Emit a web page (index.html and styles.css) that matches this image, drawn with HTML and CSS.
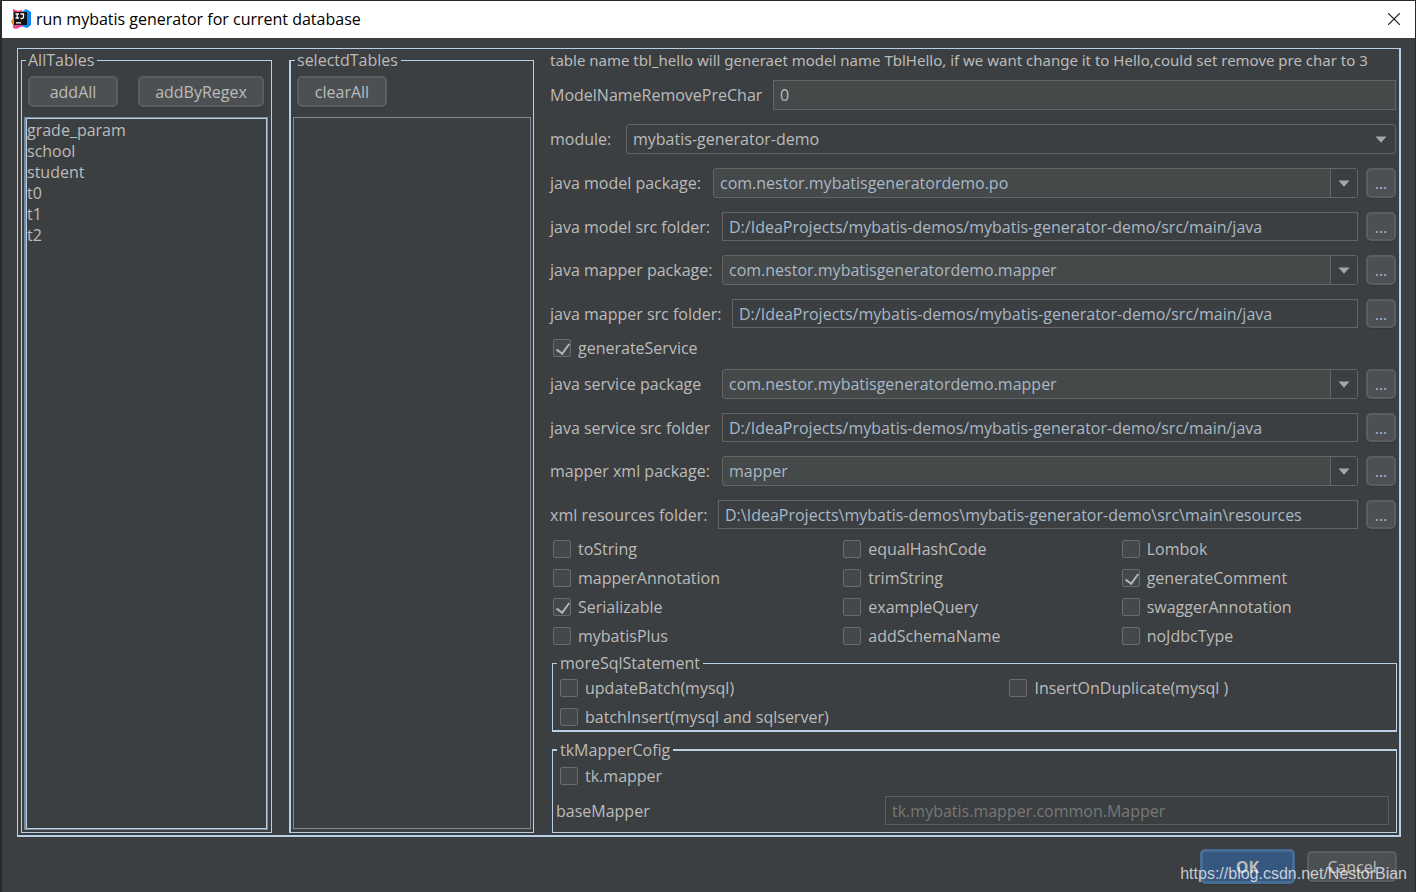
FILE: index.html
```html
<!DOCTYPE html>
<html lang="en">
<head>
<meta charset="utf-8">
<title>run mybatis generator for current database</title>
<link rel="stylesheet" href="styles.css">
</head>
<body>
<svg class="defs" aria-hidden="true">
  <symbol id="arrow" viewBox="0 0 12 7"><path d="M0.500 0.500h11L6 6.800z" fill="#a2a6a9"/></symbol>
</svg>
<main class="window">
  <header class="titlebar">
    <svg class="logo" viewBox="0 0 20 20" aria-hidden="true">
      <path d="M2 0l5 2 4-1 2 5-3 8-9 1 1-6z" fill="#ff3c64"/>
      <path d="M0 12l3-4 4 6-3 3-3-2z" fill="#ff8a2a"/>
      <path d="M11 3l4-3 5 3v13l-4 3-6-2z" fill="#0b86f5"/>
      <path d="M2 15l8 0 2 2-7 3-3-1z" fill="#f0409a"/>
      <path d="M3 3h13v13H3z" fill="#151515"/>
      <path d="M4.500 5h3.500M6.200 5v4M4.500 9h3.500M9.500 5h3v3q0 1.500-1.500 1.500h-1.500M5 13.800h5" fill="none" stroke="#fff" stroke-width="1.300"/>
    </svg>
    <h1 class="title">run mybatis generator for current database</h1>
    <button class="close" type="button" aria-label="Close">
      <svg viewBox="0 0 12 12" aria-hidden="true"><path d="M0 0L12 12M12 0L0 12" stroke="#111" stroke-width="1.100"/></svg>
    </button>
  </header>

  <form class="frame">
    <fieldset class="group tables all">
      <legend>AllTables</legend>
      <div class="actions">
        <button class="btn small" type="button">addAll</button>
        <button class="btn wide" type="button">addByRegex</button>
      </div>
      <ul class="list focused">
        <li>grade_param</li><li>school</li><li>student</li><li>t0</li><li>t1</li><li>t2</li>
      </ul>
    </fieldset>

    <fieldset class="group tables selected">
      <legend>selectdTables</legend>
      <div class="actions">
        <button class="btn small" type="button">clearAll</button>
      </div>
      <ul class="list"></ul>
    </fieldset>

    <div class="settings">
      <p class="hint">table name tbl_hello will generaet model name TblHello, if we want change it to Hello,could set remove pre char to 3</p>

      <div class="rows">
        <div class="row">
          <label class="l-prechar" for="prechar">ModelNameRemovePreChar</label>
          <input class="field filled" id="prechar" type="text" value="0">
        </div>
        <div class="row">
          <label class="l-module" for="module">module:</label>
          <div class="combo plain">
            <select id="module"><option>mybatis-generator-demo</option></select>
            <svg class="arrow" aria-hidden="true"><use href="#arrow"/></svg>
          </div>
        </div>
        <div class="row">
          <label class="l-model" for="modelpkg">java model package:</label>
          <div class="combo"><input id="modelpkg" type="text" value="com.nestor.mybatisgeneratordemo.po"><button type="button" aria-label="Show packages"><svg class="arrow"><use href="#arrow"/></svg></button></div>
          <button class="btn more" type="button">...</button>
        </div>
        <div class="row low">
          <label class="l-std" for="modelsrc">java model src folder:</label>
          <input class="field" id="modelsrc" type="text" value="D:/IdeaProjects/mybatis-demos/mybatis-generator-demo/src/main/java">
          <button class="btn more" type="button">...</button>
        </div>
        <div class="row">
          <label class="l-std" for="mapperpkg">java mapper package:</label>
          <div class="combo"><input id="mapperpkg" type="text" value="com.nestor.mybatisgeneratordemo.mapper"><button type="button" aria-label="Show packages"><svg class="arrow"><use href="#arrow"/></svg></button></div>
          <button class="btn more" type="button">...</button>
        </div>
        <div class="row low">
          <label class="l-mappersrc" for="mappersrc">java mapper src folder:</label>
          <input class="field" id="mappersrc" type="text" value="D:/IdeaProjects/mybatis-demos/mybatis-generator-demo/src/main/java">
          <button class="btn more" type="button">...</button>
        </div>
      </div>

      <label class="check service"><input type="checkbox" checked>generateService</label>

      <div class="rows">
        <div class="row">
          <label class="l-std" for="servicepkg">java service package</label>
          <div class="combo"><input id="servicepkg" type="text" value="com.nestor.mybatisgeneratordemo.mapper"><button type="button" aria-label="Show packages"><svg class="arrow"><use href="#arrow"/></svg></button></div>
          <button class="btn more" type="button">...</button>
        </div>
        <div class="row low">
          <label class="l-std" for="servicesrc">java service src folder</label>
          <input class="field" id="servicesrc" type="text" value="D:/IdeaProjects/mybatis-demos/mybatis-generator-demo/src/main/java">
          <button class="btn more" type="button">...</button>
        </div>
        <div class="row">
          <label class="l-std" for="xmlpkg">mapper xml package:</label>
          <div class="combo"><input id="xmlpkg" type="text" value="mapper"><button type="button" aria-label="Show packages"><svg class="arrow"><use href="#arrow"/></svg></button></div>
          <button class="btn more" type="button">...</button>
        </div>
        <div class="row low">
          <label class="l-xml" for="xmlres">xml resources folder:</label>
          <input class="field" id="xmlres" type="text" value="D:\IdeaProjects\mybatis-demos\mybatis-generator-demo\src\main\resources">
          <button class="btn more" type="button">...</button>
        </div>
      </div>

      <div class="options">
        <label class="check"><input type="checkbox">toString</label>
        <label class="check"><input type="checkbox">equalHashCode</label>
        <label class="check"><input type="checkbox">Lombok</label>
        <label class="check"><input type="checkbox">mapperAnnotation</label>
        <label class="check"><input type="checkbox">trimString</label>
        <label class="check"><input type="checkbox" checked>generateComment</label>
        <label class="check"><input type="checkbox" checked>Serializable</label>
        <label class="check"><input type="checkbox">exampleQuery</label>
        <label class="check"><input type="checkbox">swaggerAnnotation</label>
        <label class="check"><input type="checkbox">mybatisPlus</label>
        <label class="check"><input type="checkbox">addSchemaName</label>
        <label class="check"><input type="checkbox">noJdbcType</label>
      </div>

      <fieldset class="group sql">
        <legend>moreSqlStatement</legend>
        <div class="sql-options">
          <label class="check"><input type="checkbox">updateBatch(mysql)</label>
          <label class="check"><input type="checkbox">InsertOnDuplicate(mysql )</label>
          <label class="check"><input type="checkbox">batchInsert(mysql and sqlserver)</label>
        </div>
      </fieldset>

      <fieldset class="group tk">
        <legend>tkMapperCofig</legend>
        <label class="check"><input type="checkbox">tk.mapper</label>
        <div class="base">
          <label for="base">baseMapper</label>
          <input class="field" id="base" type="text" value="tk.mybatis.mapper.common.Mapper" disabled>
        </div>
      </fieldset>
    </div>
  </form>

  <footer class="footer">
    <button class="btn ok" type="button">OK</button>
    <button class="btn small" type="button">Cancel</button>
    <span class="watermark">https://blog.csdn.net/NestorBian</span>
  </footer>
</main>
</body>
</html>
```
FILE: styles.css
```css
* { box-sizing: border-box; }

body {
  margin: 0;
  padding: 1px 1px 0 2px;
  min-height: 100vh;
  display: flex;
  background: #292a2c;
  color: #bbbbbb;
  font: 16px/22px "Open Sans", "Noto Sans", sans-serif;
}

button, input, select { font: inherit; color: inherit; margin: 0; }
h1, p, ul { margin: 0; padding: 0; }

.defs { position: absolute; width: 0; height: 0; }

.window {
  flex: 1;
  min-width: 0;
  display: flex;
  flex-direction: column;
  background: #3c3f41;
}

.titlebar {
  display: flex;
  align-items: center;
  gap: 5px;
  height: 37px;
  padding: 0 15px 2px 9px;
  background: #ffffff;
  color: #000000;
}
.logo { width: 20px; height: 20px; }
.title { flex: 1; font-size: 16px; font-weight: 400; }
.close { display: flex; padding: 0; border: 0; background: none; }
.close svg { width: 12px; height: 12px; }

.frame {
  flex: 1;
  display: flex;
  margin: 10px 14px 0 15px;
  padding-left: 3px;
  border: solid #b8cfe5;
  border-width: 1px 2px 2px 1px;
  overflow: hidden;
}

.group {
  margin: 0;
  padding: 0;
  min-width: 0;
  border: 1px solid #b8cfe5;
}
.group legend { margin-left: 4px; padding: 0 3px; }

.tables { display: flex; flex-direction: column; margin-bottom: 2px; }
.tables legend { margin-left: 2px; padding: 0 3px 0 2px; }
.all { flex: 0 0 251px; padding: 0 3px 2px 2px; }
.selected { flex: 0 0 245px; margin-left: 17px; padding: 0 2px 3px; border-left-width: 2px; }

.actions { display: flex; gap: 20px; padding: 5px 4px 10px; }

.btn {
  height: 31px;
  padding: 0;
  border: 2px solid #5b5e60;
  border-radius: 5px;
  background: #4c5052;
  box-shadow: 0 1px 1px #353739;
}
.small { width: 90px; }
.wide { width: 126px; }

.list {
  flex: 1;
  list-style: none;
  line-height: 21px;
  padding: 2px 0 0 1px;
  border: 1px solid #7a8a99;
}
.list.focused {
  border-left-width: 2px;
  box-shadow: inset 0 0 0 1px #b8cfe5;
}

.settings {
  flex: 1;
  min-width: 0;
  display: flex;
  flex-direction: column;
  padding: 0 2px 2px 16px;
}
.hint { font-family: "Noto Sans", sans-serif; font-size: 15px; white-space: nowrap; }

.rows { display: flex; flex-direction: column; gap: 14px; }
.hint + .rows { margin-top: 9px; }

.row { display: flex; height: 30px; padding-right: 1px; }
.row.low { height: 29px; }
.row label { flex: none; align-self: center; white-space: nowrap; }
.l-prechar { width: 223px; }
.l-module { width: 76px; }
.l-model { width: 163px; }
.l-std { width: 172px; }
.l-mappersrc { width: 182px; }
.l-xml { width: 168px; }

.field {
  flex: 1;
  min-width: 0;
  height: 100%;
  padding: 0 6px;
  border: 1px solid #646464;
  background: #3c3f41;
  color: #a9b7c6;
}
.field.filled { background: #45494a; color: #bbbbbb; }

.combo {
  flex: 1;
  min-width: 0;
  display: flex;
  border: 1px solid #646464;
  border-radius: 3px;
  background: #45494a;
  color: #a9b7c6;
}
.combo input { flex: 1; min-width: 0; padding: 0 6px; border: 0; background: none; }
.combo button {
  width: 27px;
  padding: 0;
  display: flex;
  align-items: center;
  justify-content: center;
  border: 0;
  border-left: 1px solid #646464;
  background: #3c3f41;
}
.combo.plain { background: #3c3f41; color: #bbbbbb; align-items: center; padding-right: 8px; }
.combo select { flex: 1; height: 28px; padding: 0 6px; appearance: none; border: 0; background: none; }
.arrow { flex: none; width: 12px; height: 7px; }

.more { flex: none; width: 30px; height: 100%; margin-left: 8px; color: #a9b7c6; }

.check { display: flex; align-items: center; gap: 7px; white-space: nowrap; }
.check input {
  appearance: none;
  width: 18px;
  height: 18px;
  border: 1px solid #6b6b6b;
  border-radius: 2px;
  background: #43494a;
}
.check input:checked::after {
  content: "";
  display: block;
  width: 6px;
  height: 11px;
  margin: 1px 0 0 5px;
  border: solid #b4b6b7;
  border-width: 0 2px 2px 0;
  transform: rotate(36deg);
}
.service { margin: 9px 0 10px 3px; }

.options {
  display: grid;
  grid-template-columns: 290fr 278fr 275fr;
  row-gap: 7px;
  margin: 9px 0 5px 3px;
}

.sql, .tk { margin-left: 2px; }
.sql { border-bottom-width: 2px; }
.sql-options {
  display: grid;
  grid-template-columns: 450fr 387fr;
  row-gap: 7px;
  padding: 3px 0 2px 7px;
}
.tk { border-top-width: 2px; margin-top: 7px; }
.tk .check { padding: 4px 7px; }
.base { display: flex; align-items: center; justify-content: space-between; padding: 5px 7px 7px 3px; height: 41px; }
.base .field { flex: 0 1 504px; color: #777777; border-color: #5a5c5d; }

.footer {
  position: relative;
  display: flex;
  justify-content: flex-end;
  align-items: center;
  gap: 12px;
  padding: 12px 18px 9px 0;
}
.ok {
  width: 95px;
  height: 35px;
  border: 3px solid #466d94;
  background: #365880;
  font-weight: 700;
}
.watermark {
  position: absolute;
  right: 8px;
  bottom: 8px;
  font: 16px/22px "Liberation Sans", sans-serif;
  color: #ffffffb8;
}
```
